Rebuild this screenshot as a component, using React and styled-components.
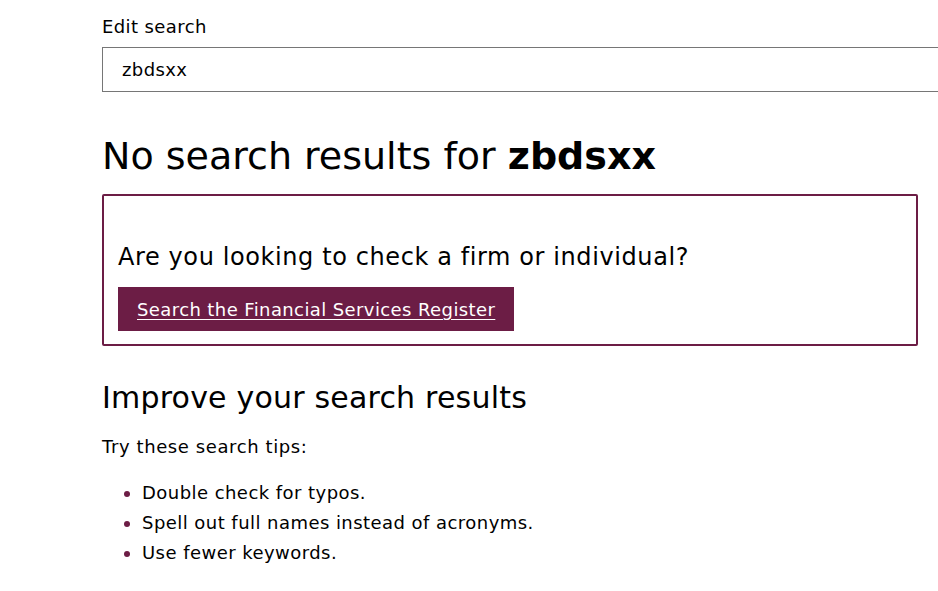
import React from "react";
import styled, { createGlobalStyle } from "styled-components";

const Global = createGlobalStyle`
  html, body { margin: 0; padding: 0; background: #fff; overflow: hidden; }
  body { font-family: "DejaVu Sans", Verdana, sans-serif; color: #000; }
`;

const Main = styled.main`
  padding: 12px 0 0 102px;
  width: 920px;
`;

const Label = styled.label`
  display: block;
  font-size: 18px;
  line-height: 28px;
  letter-spacing: 0.4px;
  margin: 1px 0 6px;
`;

const Input = styled.input`
  box-sizing: border-box;
  display: block;
  width: 100%;
  height: 45px;
  border: 1px solid #767676;
  padding: 0 19px;
  font-family: inherit;
  font-size: 18px;
  letter-spacing: 0.4px;
  color: #000;
  outline: none;
`;

const Heading = styled.h1`
  margin: 39px 0 0;
  font-size: 38px;
  line-height: 50px;
  font-weight: 400;
  b { font-weight: 700; }
`;

const Panel = styled.section`
  box-sizing: border-box;
  width: 816px;
  margin-top: 13px;
  border: 2px solid #6c1d45;
  border-radius: 2px;
  padding: 45px 14px 13px;
`;

const PanelText = styled.p`
  margin: 0 0 14px;
  font-size: 24px;
  line-height: 32px;
  letter-spacing: 0.6px;
`;

const Button = styled.a`
  display: inline-flex;
  align-items: center;
  height: 44px;
  padding: 0 19px;
  background: #6c1d45;
  color: #fff;
  font-size: 18px;
  letter-spacing: 0.4px;
  text-decoration: underline;
  text-underline-offset: 3px;
  text-decoration-thickness: 1px;
`;

const SubHeading = styled.h2`
  margin: 32px 0 0;
  font-size: 30px;
  line-height: 40px;
  letter-spacing: 0.2px;
  font-weight: 400;
`;

const Para = styled.p`
  margin: 15px 0 0;
  font-size: 18px;
  line-height: 28px;
  letter-spacing: 0.6px;
`;

const Tips = styled.ul`
  margin: 17px 0 0;
  padding: 0 0 0 40px;
  list-style: disc;
  li {
    font-size: 18px;
    line-height: 30px;
    letter-spacing: 0.45px;
  }
  li::marker { color: #6c1d45; }
`;

export default function App() {
  return (
    <>
      <Global />
      <Main>
        <Label htmlFor="q">Edit search</Label>
        <Input id="q" defaultValue="zbdsxx" />
        <Heading>No search results for <b>zbdsxx</b></Heading>
        <Panel>
          <PanelText>Are you looking to check a firm or individual?</PanelText>
          <Button href="#">Search the Financial Services Register</Button>
        </Panel>
        <SubHeading>Improve your search results</SubHeading>
        <Para>Try these search tips:</Para>
        <Tips>
          <li>Double check for typos.</li>
          <li>Spell out full names instead of acronyms.</li>
          <li>Use fewer keywords.</li>
        </Tips>
      </Main>
    </>
  );
}
